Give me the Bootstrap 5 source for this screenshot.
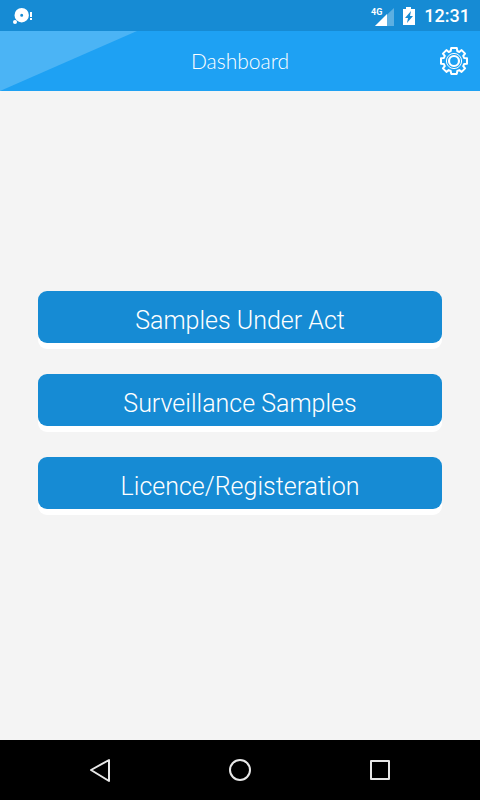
<!DOCTYPE html>
<html lang="en">
<head>
<meta charset="utf-8">
<meta name="viewport" content="width=device-width, initial-scale=1">
<title>Dashboard</title>
<link href="https://cdn.jsdelivr.net/npm/bootstrap@5.3.0/dist/css/bootstrap.min.css" rel="stylesheet">
<style>
body { font-family: Roboto, sans-serif; background: #f4f4f4; }
.status-strip { background: #168bd4; height: 31px; padding: 0 10px 0 12px; color: #fff; }
.clock { font-size: 18px; line-height: 20px; font-weight: 500; }
.app-header { background: #1ea1f3; height: 60px; }
.app-header .sheen { width: 137px; height: 60px; }
.app-title { font-family: Lato, sans-serif; font-weight: 300; font-size: 21px; line-height: 28px; color: #fff; }
.gear-btn { width: 30px; height: 30px; margin-right: 11px; }
.menu-list { gap: 31px; padding: 0 38px 32px; }
.menu-btn { background: #168bd4; color: #fff; font-weight: 300; font-size: 25px; line-height: 30px; height: 52px; padding: 8px 12px 0; border: 0; border-radius: 9px; box-shadow: 0 6px 0 #fff; }
.menu-btn:hover { background: #127cbf; color: #fff; }
.soft-keys { background: #000; height: 60px; padding: 0 30px; }
</style>
<script src="https://cdn.jsdelivr.net/npm/bootstrap@5.3.0/dist/js/bootstrap.bundle.min.js"></script>
</head>
<body class="d-flex flex-column min-vh-100">
<div class="status-strip d-flex align-items-center justify-content-between">
  <svg width="22" height="20" viewBox="0 0 22 20" aria-hidden="true"><path fill="#fff" fill-rule="evenodd" d="M9.700 2a7.200 7.200 0 1 1 0 14.400a7.200 7.200 0 1 1 0-14.400zM9.700 7.700a1.500 1.500 0 1 0 0 3a1.500 1.500 0 1 0 0-3z"/><circle cx="3" cy="16" r="2" fill="#fff"/><path fill="#fff" d="M18 6h2v5h-2zM18 12h2v2h-2z"/></svg>
  <div class="d-flex align-items-center">
    <svg class="me-2" width="24" height="22" viewBox="0 0 24 22" aria-hidden="true"><path fill="#5dafe1" d="M24 3v18H5z"/><path fill="#fff" d="M17 9v12H5z"/><path fill="#168bd4" d="M0 0h13v11H0z"/><text x="1" y="10" fill="#fff" font-family="Roboto, sans-serif" font-size="9" font-weight="700">4G</text></svg>
    <svg class="me-2" width="14" height="20" viewBox="0 0 14 20" aria-hidden="true"><path fill="#fff" fill-rule="evenodd" d="M4 1h5v2h4v16H1V3h3zM9 5l-6 7h3l-1 5 6-7H8z"/></svg>
    <span class="clock">12:31</span>
  </div>
</div>
<header class="app-header position-relative d-flex align-items-center justify-content-end">
  <svg class="sheen position-absolute top-0 start-0" viewBox="0 0 137 60" aria-hidden="true"><path fill="#4bb4f5" d="M0 0h137L0 60z"/></svg>
  <h1 class="app-title position-absolute start-0 end-0 text-center m-0">Dashboard</h1>
  <button type="button" class="gear-btn btn p-0 border-0 d-flex" aria-label="Settings">
    <svg width="30" height="30" viewBox="0 0 30 30" fill="none" stroke="#fff" stroke-width="2" stroke-linejoin="round" aria-hidden="true"><path d="M12.200 2h5.600l.5 3 2 1 2.300-1.900 3.500 3.500L24.200 9.900l.9 2 2.900.3v5.600l-2.900.3-.9 2 1.900 2.300-3.500 3.500-2.300-1.800-2 .9-.5 2.900h-5.600l-.5-2.900-2-.9-2.300 1.800-3.500-3.500 1.900-2.300-.9-2-2.900-.3v-5.600l2.900-.3.9-2-1.900-2.300 3.500-3.500L9.700 6l2-1z"/><circle cx="15" cy="15" r="5" stroke-width="2.200"/><circle cx="15" cy="15" r="7.600" stroke-width="1"/></svg>
  </button>
</header>
<main class="menu-list flex-grow-1 d-flex flex-column justify-content-center">
  <button type="button" class="menu-btn btn w-100">Samples Under Act</button>
  <button type="button" class="menu-btn btn w-100">Surveillance Samples</button>
  <button type="button" class="menu-btn btn w-100">Licence/Registeration</button>
</main>
<nav class="soft-keys d-flex align-items-center justify-content-around" aria-label="System">
  <button type="button" class="btn p-0 border-0 d-flex" aria-label="Back"><svg width="24" height="26" viewBox="0 0 24 26" fill="none" stroke="#e8e8e8" stroke-width="2" stroke-linejoin="round"><path d="M21 3v21L3 13z"/></svg></button>
  <button type="button" class="btn p-0 border-0 d-flex" aria-label="Home"><svg width="24" height="24" viewBox="0 0 24 24" fill="none" stroke="#e8e8e8" stroke-width="2"><circle cx="12" cy="12" r="10"/></svg></button>
  <button type="button" class="btn p-0 border-0 d-flex" aria-label="Recent apps"><svg width="24" height="24" viewBox="0 0 24 24" fill="none" stroke="#e8e8e8" stroke-width="2" stroke-linejoin="round"><path d="M3 3h18v18H3z"/></svg></button>
</nav>
</body>
</html>
